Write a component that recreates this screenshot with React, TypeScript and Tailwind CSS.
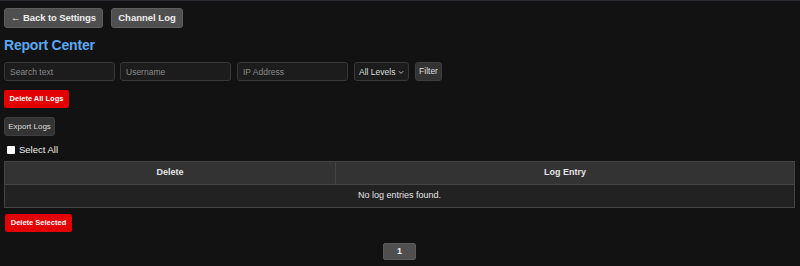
import React from 'react';

const font = { fontFamily: '"Liberation Sans", Arial, sans-serif' };

const inputCls =
  'h-[19px] w-[111px] rounded-[3px] border border-[#383838] bg-[#1c1c1c] px-[5px] text-[8.5px] text-[#ddd] placeholder:text-[#8a8a8a] outline-none';

export default function App() {
  return (
    <div style={font} className="h-[266px] w-[800px] overflow-hidden border-t border-[#2a2a30] bg-[#121212] pl-1 pr-[5px] text-[#e5e5e5]">
      <div className="mt-[7px] flex gap-2">
        <button className="h-[20px] w-[99px] whitespace-nowrap rounded-[3px] border border-[#5e5e5e] bg-[#4f4f4f] text-[9.5px] font-bold tracking-[-0.1px] text-[#eee]">
          ← Back to Settings
        </button>
        <button className="h-[20px] w-[72px] whitespace-nowrap rounded-[3px] border border-[#5e5e5e] bg-[#4f4f4f] text-[9.5px] font-bold text-[#eee]">
          Channel Log
        </button>
      </div>

      <h1 className="mt-[9px] h-[17px] whitespace-nowrap text-[14px] leading-[17px] font-bold tracking-[-0.2px] text-[#5aa8f2]">Report Center</h1>

      <div className="mt-[8px] flex items-center">
        <input className={inputCls} placeholder="Search text" />
        <input className={`${inputCls} ml-[5px]`} placeholder="Username" />
        <input className={`${inputCls} ml-[6px] w-[110px]`} placeholder="IP Address" />
        <div className="relative ml-[6px] h-[19px] w-[55px] rounded-[3px] border border-[#383838] bg-[#1c1c1c]">
          <span className="absolute left-[4px] top-[4px] whitespace-nowrap text-[8.5px] leading-[10px] text-[#ddd]">All Levels</span>
          <svg className="absolute right-[4px] top-[7px]" width="6" height="5" viewBox="0 0 6 5">
            <path d="M0.8 1.2 L3 3.4 L5.2 1.2" fill="none" stroke="#bbb" strokeWidth="1" />
          </svg>
        </div>
        <button className="ml-[6px] h-[19px] w-[27px] rounded-[3px] border border-[#3e3e3e] bg-[#333] text-[8.5px] text-[#ddd]">
          Filter
        </button>
      </div>

      <button className="mt-[9px] block h-[18px] w-[65px] whitespace-nowrap rounded-[2px] bg-[#e20000] text-[7.5px] font-bold text-white">
        Delete All Logs
      </button>

      <button className="mt-[9px] block h-[19px] w-[51px] whitespace-nowrap rounded-[3px] border border-[#3e3e3e] bg-[#333] text-[8px] text-[#ddd]">
        Export Logs
      </button>

      <label className="mt-[9px] flex h-[9px] items-center gap-[4px] pl-[3px]">
        <span className="h-[8px] w-[8px] rounded-[1px] bg-white" />
        <span className="text-[9.5px] leading-[10px] text-[#eee]">Select All</span>
      </label>

      <table className="mt-[7px] w-full border-collapse border border-[#444] text-[9px]">
        <thead>
          <tr className="h-[23px] bg-[#333]">
            <th className="w-[331px] border-r border-[#444] font-bold text-[#e5e5e5]">Delete</th>
            <th className="font-bold text-[#e5e5e5]">Log Entry</th>
          </tr>
        </thead>
        <tbody>
          <tr className="h-[23px] border-t border-[#444] bg-[#222]">
            <td colSpan={2} className="text-center text-[#e5e5e5]">No log entries found.</td>
          </tr>
        </tbody>
      </table>

      <button className="mt-[6px] ml-px block h-[18px] w-[67px] whitespace-nowrap rounded-[2px] bg-[#e20000] text-[7.5px] font-bold text-white">
        Delete Selected
      </button>

      <div className="mt-[11px] flex justify-center">
        <button className="h-[17px] w-[33px] rounded-[2px] border border-[#5a5a5a] bg-[#4f4f4f] text-[9px] font-bold text-[#eee]">
          1
        </button>
      </div>
    </div>
  );
}
